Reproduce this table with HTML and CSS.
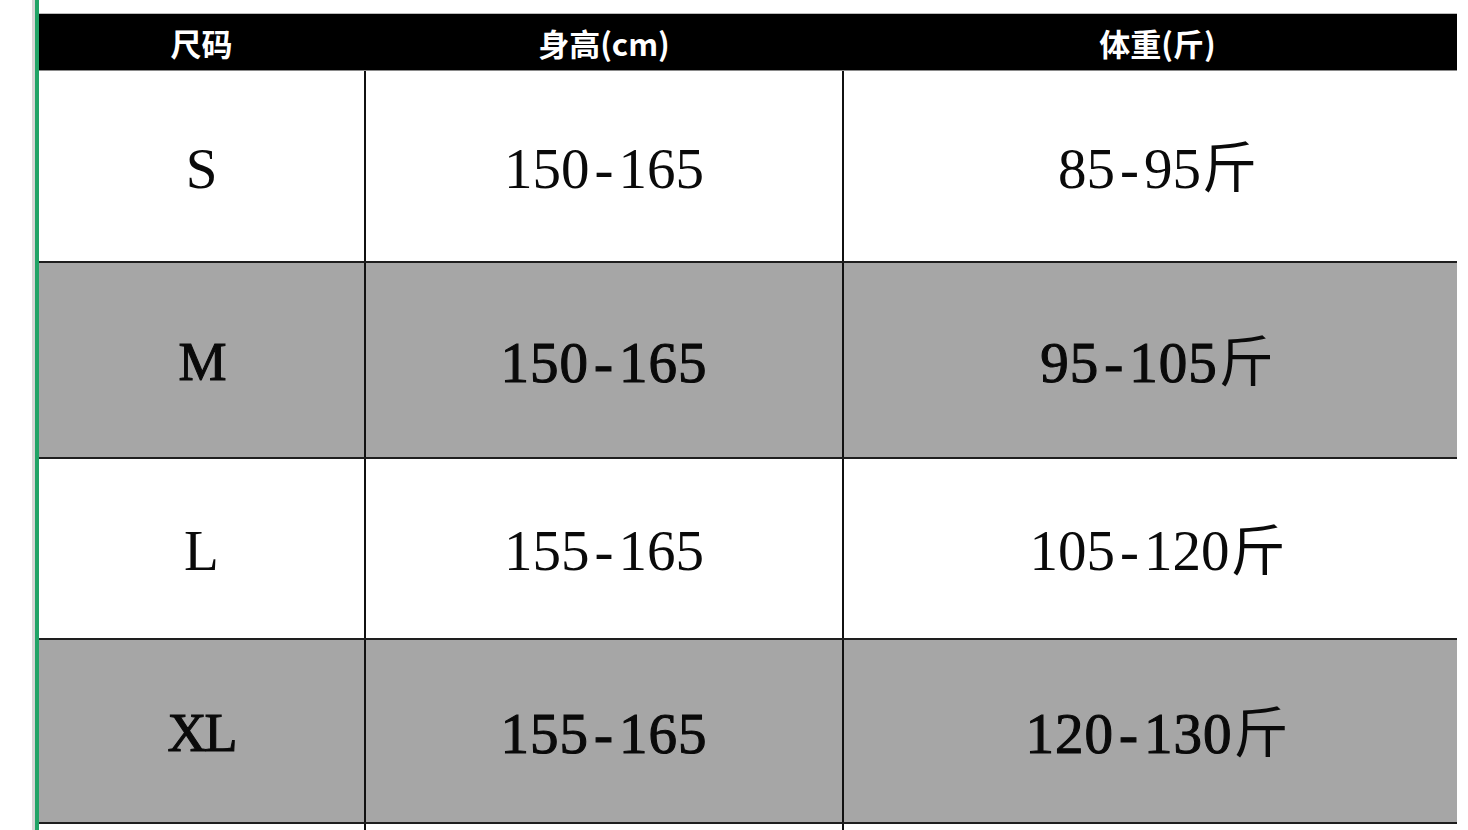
FILE: index.html
```html
<!DOCTYPE html>
<html lang="zh">
<head>
<meta charset="utf-8">
<title>尺码表</title>
<link rel="stylesheet" href="styles.css">
</head>
<body>
<div class="sheet">
  <div class="gutter"></div>
  <div class="edge"></div>
  <div class="grid">
    <div class="top-space"></div>
    <div class="row head">
      <div class="cell">尺码</div>
      <div class="cell">身高(cm)</div>
      <div class="cell">体重(斤)</div>
    </div>
    <div class="row r1 light">
      <div class="cell size">S</div>
      <div class="cell">150<span class="dash">-</span>165</div>
      <div class="cell">85<span class="dash">-</span>95<span class="unit">斤</span></div>
    </div>
    <div class="row r2 dark">
      <div class="cell size">M</div>
      <div class="cell">150<span class="dash">-</span>165</div>
      <div class="cell">95<span class="dash">-</span>105<span class="unit">斤</span></div>
    </div>
    <div class="row r3 light">
      <div class="cell size">L</div>
      <div class="cell">155<span class="dash">-</span>165</div>
      <div class="cell">105<span class="dash">-</span>120<span class="unit">斤</span></div>
    </div>
    <div class="row r4 dark">
      <div class="cell size">XL</div>
      <div class="cell">155<span class="dash">-</span>165</div>
      <div class="cell">120<span class="dash">-</span>130<span class="unit">斤</span></div>
    </div>
    <div class="row r5 light">
      <div class="cell"></div>
      <div class="cell"></div>
      <div class="cell"></div>
    </div>
  </div>
</div>
</body>
</html>
```
FILE: styles.css
```css
html, body {
  margin: 0;
  padding: 0;
  background: #ffffff;
  overflow: hidden;
}
.sheet {
  display: flex;
  height: 830px;
  width: 1468px;
}
.gutter {
  width: 32px;
  flex: none;
  background: #ffffff;
}
.edge {
  width: 3px;
  flex: none;
  background: #d6d6d6;
  border-right: 4px solid #21a366;
}
.grid {
  width: 1418px;
  flex: none;
  display: flex;
  flex-direction: column;
}
.top-space {
  height: 13px;
  border-bottom: 1px solid #bdbdbd;
  flex: none;
}
.row {
  display: grid;
  grid-template-columns: 325px 476px 613px;
  column-gap: 2px;
  background: #111111;
  border-bottom: 2px solid #1e1e1e;
  flex: none;
}
.cell {
  display: flex;
  align-items: center;
  justify-content: center;
  font-family: "Liberation Serif", "Noto Sans CJK SC", serif;
  font-size: 57px;
  color: #0a0a0a;
  padding-top: 4px;
  box-sizing: border-box;
  white-space: pre;
}
.cell:nth-child(3) {
  padding-left: 14px;
}
.dash {
  padding: 0 5px;
}
.unit {
  font-family: "Noto Sans CJK SC", sans-serif;
  font-weight: normal;
  font-size: 55px;
  margin-top: -10px;
  margin-left: 1px;
  -webkit-text-stroke: 0;
}
.light .cell { background: #ffffff; }
.dark .cell {
  background: #a6a6a6;
  -webkit-text-stroke: 1.1px #0a0a0a;
  letter-spacing: 1px;
}
.dark .size {
  letter-spacing: -2px;
  font-size: 54px;
}
.head {
  height: 56px;
  background: #000000;
  border-bottom: 1px solid #8a8a8a;
}
.head .cell {
  background: #000000;
  color: #ffffff;
  font-size: 31px;
  font-weight: bold;
  padding-top: 0;
  font-family: "Noto Sans CJK SC", "Liberation Serif", sans-serif;
}
.r1 { height: 190px; }
.r2 { height: 194px; }
.r3 { height: 179px; }
.r4 { height: 182px; }
.r5 { height: 20px; border-bottom: none; }
```
